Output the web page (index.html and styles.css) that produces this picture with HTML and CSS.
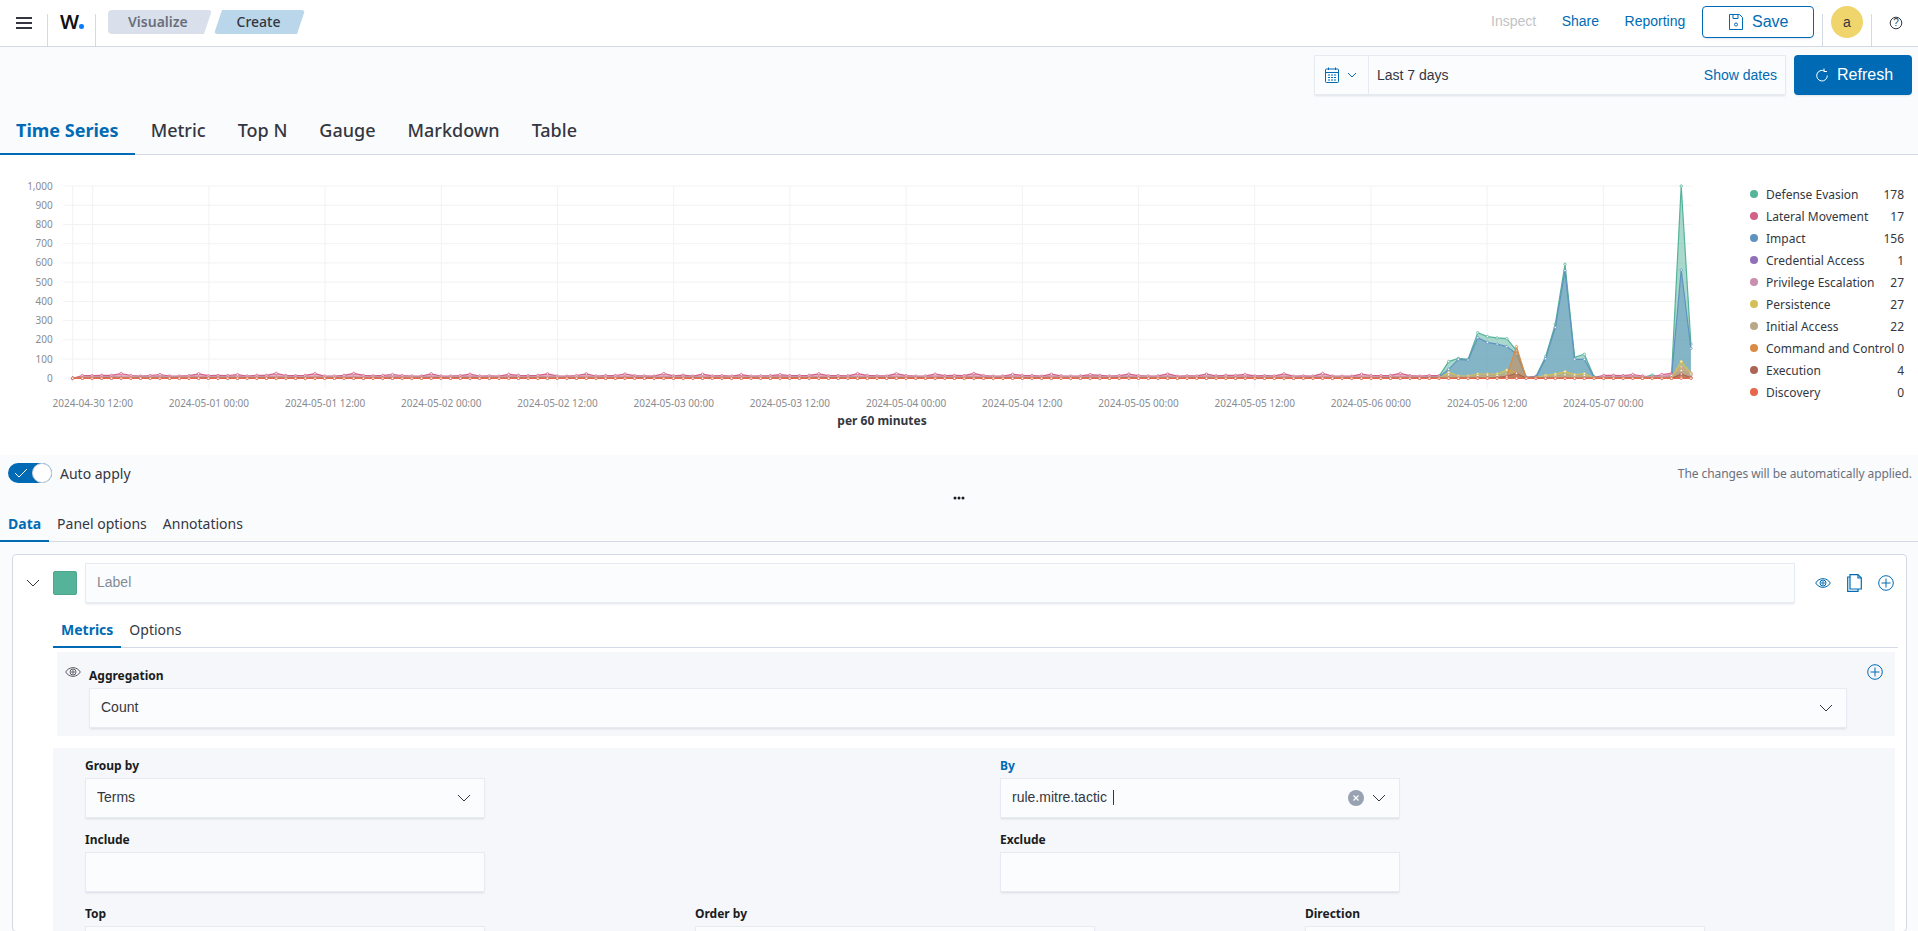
FILE: index.html
```html
<!DOCTYPE html>
<html>
<head>
<meta charset="utf-8" />
<title>Visualize</title>
<link rel="stylesheet" href="styles.css">
</head>
<body>

<div class="header">
    <div class="nav-cell menu-cell">
        <svg width="16" height="12" viewBox="0 0 16 12"><path d="M0 1h16M0 6h16M0 11h16" stroke="#343741" stroke-width="2" fill="none"/></svg>
    </div>
    <div class="nav-cell logo-cell"><span class="logo">W</span><span class="logo-dot"></span></div>
    <div class="crumbs">
        <span class="crumb crumb-first">Visualize</span>
        <span class="crumb crumb-last">Create</span>
    </div>
    <div class="header-right">
        <a class="top-link disabled">Inspect</a>
        <a class="top-link">Share</a>
        <a class="top-link">Reporting</a>
        <button class="save-btn">
            <svg width="14" height="16" viewBox="0 0 14 16" fill="none" stroke="#006bb4"><path d="M.5.5h10l3 3v12H.5z"/><path d="M4 .5v4h5v-4"/><circle cx="7" cy="10.5" r="1.5"/></svg>
            Save
        </button>
        <div class="nav-cell avatar-cell"><span class="avatar">a</span></div>
        <div class="help-cell">
            <svg width="14" height="14" viewBox="0 0 14 14"><circle cx="7" cy="7" r="5.8" fill="none" stroke="#343741"/><text x="7" y="10" text-anchor="middle" class="help-mark">?</text></svg>
        </div>
    </div>
</div>

<div class="toolbar">
    <div class="date-row">
        <div class="date-picker">
            <div class="quick-select">
                <svg width="14" height="16" viewBox="0 0 14 16" fill="none" stroke="#006bb4"><rect x=".5" y="2" width="13" height="13.5" rx="1"/><path d="M.5 5.5h13M3.500 .5v2.500M10.500 .5v2.500"/><path d="M3 8h8M3 10.500h8M3 13h8" stroke-dasharray="2 1"/></svg>
                <svg width="10" height="6" viewBox="0 0 10 6" fill="none" stroke="#006bb4"><path d="M1 1l4 4 4-4"/></svg>
            </div>
            <span class="date-value">Last 7 days</span>
            <a class="date-link">Show dates</a>
        </div>
        <button class="refresh-btn">
            <svg width="12" height="14" viewBox="0 0 12 14" fill="none" stroke="#fff"><path d="M8.500 3A5.300 5.300 0 1 0 11.300 7.500"/><path d="M8 .5v3h3"/></svg>
            Refresh
        </button>
    </div>
    <ul class="tabs tabs-large">
        <li class="tab current">Time Series</li>
        <li class="tab">Metric</li>
        <li class="tab">Top N</li>
        <li class="tab">Gauge</li>
        <li class="tab">Markdown</li>
        <li class="tab">Table</li>
    </ul>
</div>

<div class="chart-panel">
    <div id="chart" class="chart"></div>
    <ul class="legend">
        <li><i style="background:#54B399"></i><span>Defense Evasion</span><b>178</b></li>
        <li><i style="background:#D36086"></i><span>Lateral Movement</span><b>17</b></li>
        <li><i style="background:#6092C0"></i><span>Impact</span><b>156</b></li>
        <li><i style="background:#9170B8"></i><span>Credential Access</span><b>1</b></li>
        <li><i style="background:#CA8EAE"></i><span>Privilege Escalation</span><b>27</b></li>
        <li><i style="background:#D6BF57"></i><span>Persistence</span><b>27</b></li>
        <li><i style="background:#B9A888"></i><span>Initial Access</span><b>22</b></li>
        <li><i style="background:#DA8B45"></i><span>Command and Control</span><b>0</b></li>
        <li><i style="background:#AA6556"></i><span>Execution</span><b>4</b></li>
        <li><i style="background:#E7664C"></i><span>Discovery</span><b>0</b></li>
    </ul>
</div>

<div class="editor">
    <div class="apply-row">
        <div class="apply-left">
            <span class="toggle">
                <svg width="14" height="10" viewBox="0 0 14 10" fill="none" stroke="#fff"><path d="M1 5l4 4 8-8"/></svg>
                <span class="knob"></span>
            </span>
            <span class="apply-label">Auto apply</span>
        </div>
        <span class="apply-note">The changes will be automatically applied.</span>
    </div>
    <div class="handle">
        <svg width="12" height="4" viewBox="0 0 12 4" fill="#1a1c21"><circle cx="2" cy="2" r="1.500"/><circle cx="6" cy="2" r="1.500"/><circle cx="10" cy="2" r="1.500"/></svg>
    </div>
    <ul class="tabs tabs-small">
        <li class="tab current">Data</li>
        <li class="tab">Panel options</li>
        <li class="tab">Annotations</li>
    </ul>

    <div class="series">
        <div class="series-head">
            <svg class="series-toggle" width="14" height="8" viewBox="0 0 14 8" fill="none" stroke="#343741"><path d="M1 1l6 6 6-6"/></svg>
            <span class="swatch"></span>
            <div class="field label-field"><span class="placeholder">Label</span></div>
            <div class="series-actions">
                <svg width="16" height="12" viewBox="0 0 16 12" fill="none" stroke="#006bb4"><path d="M.7 6C4 .2 12 .2 15.300 6 12 11.800 4 11.800 .7 6z"/><circle cx="8" cy="6" r="3"/><circle cx="8" cy="6" r="1.200"/></svg>
                <svg width="15" height="18" viewBox="0 0 15 18" fill="none" stroke="#006bb4" stroke-width="1.200"><path d="M3 .7h8l3.300 3.300v11H3z"/><path d="M3 3H.7v14.300H11V15"/><path d="M11 .7V4h3.300"/></svg>
                <svg width="16" height="16" viewBox="0 0 16 16" fill="none" stroke="#006bb4"><circle cx="8" cy="8" r="7.300"/><path d="M8 3.500v9M3.500 8h9"/></svg>
            </div>
        </div>

        <div class="series-body">
            <ul class="tabs tabs-small tabs-inner">
                <li class="tab current">Metrics</li>
                <li class="tab">Options</li>
            </ul>

            <div class="aggregation">
                <svg class="agg-eye" width="16" height="12" viewBox="0 0 16 12" fill="none" stroke="#343741" stroke-width=".8"><path d="M.7 6C4 .2 12 .2 15.300 6 12 11.800 4 11.800 .7 6z"/><circle cx="8" cy="6" r="3"/><circle cx="8" cy="6" r="1.200"/></svg>
                <div class="agg-main">
                    <label class="form-label">Aggregation</label>
                    <div class="field select">
                        <span>Count</span>
                        <svg width="14" height="8" viewBox="0 0 14 8" fill="none" stroke="#343741"><path d="M1 1l6 6 6-6"/></svg>
                    </div>
                </div>
                <svg class="agg-add" width="16" height="16" viewBox="0 0 16 16" fill="none" stroke="#006bb4"><circle cx="8" cy="8" r="7.300"/><path d="M8 3.500v9M3.500 8h9"/></svg>
            </div>

            <div class="group-block">
                <div class="form-row two-cols">
                    <div class="form-item">
                        <label class="form-label">Group by</label>
                        <div class="field select">
                            <span>Terms</span>
                            <svg width="14" height="8" viewBox="0 0 14 8" fill="none" stroke="#343741"><path d="M1 1l6 6 6-6"/></svg>
                        </div>
                    </div>
                    <div class="form-item">
                        <label class="form-label active">By</label>
                        <div class="field select">
                            <span class="combo-value">rule.mitre.tactic<i class="caret"></i></span>
                            <span class="combo-icons">
                                <span class="clear-btn">
                                    <svg width="6" height="6" viewBox="0 0 6 6" stroke="#fff" stroke-width="1.200"><path d="M.5 .5l5 5M5.500 .5l-5 5"/></svg>
                                </span>
                                <svg width="14" height="8" viewBox="0 0 14 8" fill="none" stroke="#343741"><path d="M1 1l6 6 6-6"/></svg>
                            </span>
                        </div>
                    </div>
                </div>
                <div class="form-row two-cols">
                    <div class="form-item">
                        <label class="form-label">Include</label>
                        <div class="field"></div>
                    </div>
                    <div class="form-item">
                        <label class="form-label">Exclude</label>
                        <div class="field"></div>
                    </div>
                </div>
                <div class="form-row three-cols">
                    <div class="form-item">
                        <label class="form-label">Top</label>
                        <div class="field"></div>
                    </div>
                    <div class="form-item">
                        <label class="form-label">Order by</label>
                        <div class="field"></div>
                    </div>
                    <div class="form-item">
                        <label class="form-label">Direction</label>
                        <div class="field"></div>
                    </div>
                </div>
            </div>
        </div>
    </div>
</div>

<script src="chart.js"></script>
</body>
</html>
```

FILE: styles.css
```css
*{
	box-sizing:border-box;
	margin:0;
	padding:0;
	list-style:none;
}
html,body{
	height:931px;
	overflow:hidden;
}
body{
	background:#fff;
	color:#343741;
	font:14px "Liberation Sans",sans-serif;
}
button{
	font-family:inherit;
}

/* top bar */
.header{
	display:flex;
	height:47px;
	border-bottom:1px solid #d3dae6;
	background:#fff;
}
.nav-cell{
	align-self:flex-end;
	height:32px;
	border-right:1px solid #d3dae6;
	margin-bottom:0;
}
.menu-cell{
	width:48px;
	padding:2px 0 0 16px;
}
.logo-cell{
	display:flex;
	width:48px;
	padding:0 0 0 12px;
}
.logo{
	font:600 20px/16px "Noto Sans",sans-serif;
	color:#111;
}
.logo-dot{
	width:4.5px;
	height:4.500px;
	border-radius:50%;
	background:#0a7bff;
	margin:10px 0 0 0;
}
.crumbs{
	display:flex;
	gap:2px;
	margin:10px 0 0 12px;
	height:24px;
}
.crumb{
	font:500 14px/24px "Noto Sans",sans-serif;
	border-radius:4px;
}
.crumb-first{
	width:104px;
	padding-left:20px;
	background:#d9dfeb;
	color:#69707d;
	font-weight:600;
	clip-path:polygon(0 0,100% 0,calc(100% - 8px) 100%,0 100%);
}
.crumb-last{
	width:91px;
	padding-left:22.5px;
	background:#b9d6ea;
	color:#343741;
	clip-path:polygon(8px 0,100% 0,calc(100% - 8px) 100%,0 100%);
}
.header-right{
	display:flex;
	align-items:flex-start;
	margin-left:auto;
}
.top-link{
	color:#006bb4;
	line-height:42px;
	padding:0 12.750px;
}
.top-link.disabled{
	color:#c2c3c6;
}
.save-btn{
	display:flex;
	align-items:center;
	gap:9px;
	width:112px;
	height:32px;
	margin:6px 8px 0 4px;
	padding-left:26px;
	background:#fff;
	border:1px solid #006bb4;
	border-radius:4px;
	color:#006bb4;
	font-size:16px;
	box-shadow:0 2px 2px -1px rgba(152,162,179,.3);
}
.avatar-cell{
	width:50px;
	border-left:1px solid #d3dae6;
	padding-left:8px;
	margin-top:14px;
}
.avatar{
	display:block;
	position:relative;
	top:-8px;
	width:32px;
	height:32px;
	border-radius:50%;
	background:#efd56b;
	color:#343741;
	text-align:center;
	line-height:32px;
}
.help-cell{
	width:46px;
	padding:16px 0 0 17px;
}
.help-mark{
	font:10px "Liberation Sans",sans-serif;
	fill:#343741;
}

/* date row and chart tabs */
.toolbar{
	height:108px;
	background:#fafbfd;
}
.date-row{
	display:flex;
	justify-content:flex-end;
	gap:8px;
	padding:8px 6px 0 0;
}
.date-picker{
	display:flex;
	align-items:center;
	width:472px;
	height:40px;
	background:#fbfcfd;
	border:1px solid #e6eaf1;
	box-shadow:0 2px 2px -1px rgba(152,162,179,.3);
}
.quick-select{
	display:flex;
	align-items:center;
	gap:8px;
	width:54px;
	height:100%;
	padding-left:10px;
	border-right:1px solid #e6eaf1;
}
.date-value{
	padding-left:8px;
	margin-bottom:1px;
}
.date-link{
	margin-left:auto;
	margin-bottom:1px;
	padding-right:8px;
	color:#006bb4;
}
.refresh-btn{
	display:flex;
	align-items:center;
	gap:9px;
	width:118px;
	height:40px;
	padding-left:22px;
	background:#006bb4;
	border:0;
	border-radius:4px;
	color:#fff;
	font-size:16px;
	box-shadow:0 2px 2px -1px rgba(152,162,179,.3);
}
.tabs{
	display:flex;
	border-bottom:1px solid #d3dae6;
	font-family:"Noto Sans",sans-serif;
}
.tab{
	margin-bottom:-1px;
	font-weight:400;
}
.tab.current{
	color:#006bb4;
	font-weight:700;
	box-shadow:inset 0 -2px 0 #006bb4;
}
.tabs-large{
	margin-top:12px;
	font-size:18px;
}
.tabs-large .tab{
	padding:11px 16px 13px;
	line-height:24px;
	font-weight:500;
}
.tabs-large .tab.current{
	font-weight:700;
}
.tabs-small{
	font-size:14px;
}
.tabs-small .tab{
	padding:6px 8px 8px;
	line-height:20px;
}

/* chart */
.chart-panel{
	display:flex;
	height:300px;
	background:#fff;
}
.chart{
	width:1749px;
	height:300px;
}
.chart svg{
	display:block;
}
.axis-text{
	font:10px "Noto Sans",sans-serif;
	fill:#8a8c90;
}
.axis-title{
	font:700 12px "Noto Sans",sans-serif;
	fill:#343741;
}
.legend{
	flex:1;
	padding:28px 14px 0 1px;
	font:12px "Noto Sans",sans-serif;
}
.legend li{
	display:flex;
	align-items:center;
	height:22px;
}
.legend i{
	width:8px;
	height:8px;
	border-radius:50%;
	margin:0 8px 0 0;
}
.legend b{
	margin-left:auto;
	font-weight:400;
}

/* editor */
.editor{
	height:476px;
	background:#fafbfd;
}
.apply-row{
	display:flex;
	justify-content:space-between;
	align-items:center;
	padding:8px 6px 0 8px;
}
.apply-left{
	display:flex;
	align-items:center;
	gap:8px;
}
.toggle{
	position:relative;
	display:block;
	width:44px;
	height:20px;
	border-radius:10px;
	background:#006bb4;
}
.toggle svg{
	position:absolute;
	left:6px;
	top:5px;
}
.knob{
	position:absolute;
	right:0;
	top:0;
	width:20px;
	height:20px;
	border-radius:50%;
	background:#fff;
	border:1px solid #c9d0db;
}
.apply-label{
	font-family:"Noto Sans",sans-serif;
}
.apply-note{
	font:12px "Noto Sans",sans-serif;
	letter-spacing:-.08px;
	color:#69707d;
}
.handle{
	display:flex;
	justify-content:center;
	align-items:center;
	height:25px;
	padding-top:5px;
}
.series{
	height:378px;
	margin:12px 11px 0 12px;
	background:#fff;
	border:1px solid #d3dae6;
	border-radius:4px;
}
.series-head{
	display:flex;
	align-items:center;
	padding:8px 0 0 13px;
}
.series-toggle{
	width:14px;
}
.swatch{
	width:24px;
	height:24px;
	margin-left:13px;
	border-radius:2px;
	background:#54b399;
	border:1px solid #4ba68d;
}
.field{
	height:40px;
	background:#fbfcfd;
	border:1px solid #e6eaf1;
	box-shadow:0 2px 2px -1px rgba(152,162,179,.3);
	line-height:36px;
}
.label-field{
	width:1710px;
	margin-left:8px;
	padding-left:11px;
}
.placeholder{
	color:#858b96;
}
.series-actions{
	display:flex;
	align-items:center;
	gap:16px;
	margin-left:20px;
}
.series-body{
	margin:11px 8px 0 40px;
}
.tabs-inner{
	background:#fff;
}
.aggregation{
	display:flex;
	height:84px;
	margin:4px 3px 0 4px;
	padding-left:8px;
	background:#f5f7fa;
}
.agg-eye{
	margin-top:14px;
	flex:none;
}
.agg-main{
	width:1758px;
	margin:16px 0 0 8px;
}
.agg-add{
	margin:12px 0 0 20px;
	flex:none;
}
.form-label{
	display:block;
	height:16px;
	margin-bottom:4px;
	font:700 12px/16px "Noto Sans",sans-serif;
	color:#1a1c21;
}
.form-label.active{
	color:#006bb4;
}
.select{
	display:flex;
	justify-content:space-between;
	align-items:center;
	padding:0 13px 0 11px;
}
.select > span:first-child{
	margin-bottom:2px;
}
.group-block{
	margin:12px 3px 0 0;
	height:200px;
	padding:10px 0 0 32px;
	background:#f5f7fa;
	overflow:hidden;
}
.form-row{
	display:flex;
	margin-bottom:14px;
}
.form-item{
	width:399.5px;
}
.two-cols{
	gap:515.5px;
}
.three-cols{
	gap:210.5px;
}
.combo-value{
	padding-left:0;
}
.caret{
	display:inline-block;
	width:1px;
	height:15px;
	margin-left:6px;
	background:#343741;
	vertical-align:-3px;
}
.combo-icons{
	display:flex;
	align-items:center;
	gap:8px;
}
.clear-btn{
	display:flex;
	justify-content:center;
	align-items:center;
	width:16px;
	height:16px;
	border-radius:50%;
	background:#98a2b3;
}
```

FILE: chart.js
```js
var NS = "http://www.w3.org/2000/svg";
var X0 = 72.7, STEP = 9.69, Y0 = 223.3, SCALE = 0.1923;

function el(name, attrs, parent, text) {
    var e = document.createElementNS(NS, name);
    for (var k in attrs) e.setAttribute(k, attrs[k]);
    if (text) e.textContent = text;
    parent.appendChild(e);
    return e;
}

// fixed generator so the baseline noise is the same on every load
var seed = 11;
function rnd() {
    seed = (seed * 16807) % 2147483647;
    return (seed % 1000) / 1000;
}

function series(low, high, peaks) {
    var out = [];
    for (var i = 0; i < 168; i++) {
        out[i] = i == 0 ? 0 : low + rnd() * (high - low);
        if (peaks[i] !== undefined) out[i] = peaks[i];
    }
    return out;
}

// zero out a run of hours, the spikes near the end sit on an empty baseline
function quiet(from, to, value) {
    var o = {};
    for (var i = from; i <= to; i++) o[i] = value;
    return o;
}
function merge(a, b) {
    for (var k in b) a[k] = b[k];
    return a;
}

var lateralPeaks = merge(quiet(142, 149, 3), {
    150: 3, 151: 10, 152: 3, 153: 3, 154: 3, 155: 3, 156: 3,
    157: 4, 160: 14, 161: 20, 162: 12, 163: 8, 164: 20, 165: 26, 166: 30, 167: 17
});
// small bumps right along the quiet part
for (var b = 5; b < 141; b += 3 + (b % 4)) {
    lateralPeaks[b] = 19 + rnd() * 7;
}

var data = [
    ["#54B399", series(0, 4, {
        141: 10, 142: 87, 143: 104, 144: 99, 145: 237, 146: 217, 147: 210, 148: 206,
        149: 144, 150: 5, 151: 8, 152: 113, 153: 282, 154: 593, 155: 109, 156: 125,
        157: 8, 163: 17, 165: 10, 166: 1000, 167: 178
    })],
    ["#D36086", series(11, 16, lateralPeaks)],
    ["#6092C0", series(3, 6, {
        141: 6, 142: 47, 143: 99, 144: 95, 145: 211, 146: 187, 147: 178, 148: 165,
        149: 127, 150: 5, 151: 6, 152: 102, 153: 265, 154: 560, 155: 99, 156: 99,
        157: 6, 165: 6, 166: 563, 167: 156
    })],
    ["#9170B8", series(1, 3, {167: 1})],
    ["#CA8EAE", series(6, 10, merge(quiet(142, 157, 2), {165: 14, 166: 60, 167: 27}))],
    ["#D6BF57", series(0, 1, {
        142: 30, 143: 12, 144: 12, 145: 22, 146: 22, 147: 22, 148: 43, 149: 30, 150: 3,
        151: 3, 152: 15, 153: 22, 154: 35, 155: 19, 156: 24, 157: 3, 165: 4, 166: 87, 167: 27
    })],
    ["#B9A888", series(0, 1, {
        142: 18, 143: 8, 144: 8, 145: 14, 146: 18, 147: 14, 148: 20, 149: 25, 150: 2,
        152: 8, 153: 12, 154: 18, 155: 12, 156: 14, 166: 40, 167: 22
    })],
    ["#DA8B45", series(0, 0.5, {147: 2, 148: 12, 149: 165, 150: 2, 166: 8, 167: 0})],
    ["#AA6556", series(0, 0.5, {147: 3, 148: 10, 149: 26, 150: 1, 166: 22, 167: 4})],
    ["#E7664C", series(0, 0, {})]
];

var box = document.getElementById("chart");
var svg = el("svg", {width: 1749, height: 300, viewBox: "0 0 1749 300"}, box);

// grid
for (var v = 0; v <= 1000; v += 100) {
    var gy = Y0 - v * SCALE;
    el("line", {x1: 63, x2: 1691.5, y1: gy, y2: gy, stroke: "#f1f2f4"}, svg);
    el("text", {x: 52.7, y: gy + 3.5, "text-anchor": "end", "class": "axis-text"}, svg,
        v == 1000 ? "1,000" : String(v));
}
el("line", {x1: X0, x2: X0, y1: 31, y2: 228, stroke: "#f1f2f4"}, svg);

var ticks = [
    "2024-04-30 12:00", "2024-05-01 00:00", "2024-05-01 12:00", "2024-05-02 00:00",
    "2024-05-02 12:00", "2024-05-03 00:00", "2024-05-03 12:00", "2024-05-04 00:00",
    "2024-05-04 12:00", "2024-05-05 00:00", "2024-05-05 12:00", "2024-05-06 00:00",
    "2024-05-06 12:00", "2024-05-07 00:00"
];
for (var t = 0; t < ticks.length; t++) {
    var tx = 92.7 + t * 116.2;
    el("line", {x1: tx, x2: tx, y1: 31, y2: 234, stroke: "#f1f2f4"}, svg);
    el("text", {x: tx, y: 251.5, "text-anchor": "middle", "class": "axis-text"}, svg, ticks[t]);
}
el("text", {x: 882, y: 270, "text-anchor": "middle", "class": "axis-title"}, svg, "per 60 minutes");

// areas, lines and points
for (var s = 0; s < data.length; s++) {
    var color = data[s][0], vals = data[s][1], line = "";
    for (var i = 0; i < vals.length; i++) {
        line += (i ? "L" : "M") + (X0 + i * STEP).toFixed(1) + " " + (Y0 - vals[i] * SCALE).toFixed(1);
    }
    var lastX = (X0 + 167 * STEP).toFixed(1);
    el("path", {d: line + "L" + lastX + " " + Y0 + "L" + X0 + " " + Y0 + "Z", fill: color, "fill-opacity": 0.5}, svg);
    el("path", {d: line, fill: "none", stroke: color, "stroke-width": 1.2}, svg);
    for (var p = 0; p < vals.length; p++) {
        el("circle", {
            cx: X0 + p * STEP, cy: Y0 - vals[p] * SCALE, r: 1.2,
            fill: "#fff", stroke: color, "stroke-width": 0.8
        }, svg);
    }
}
```
